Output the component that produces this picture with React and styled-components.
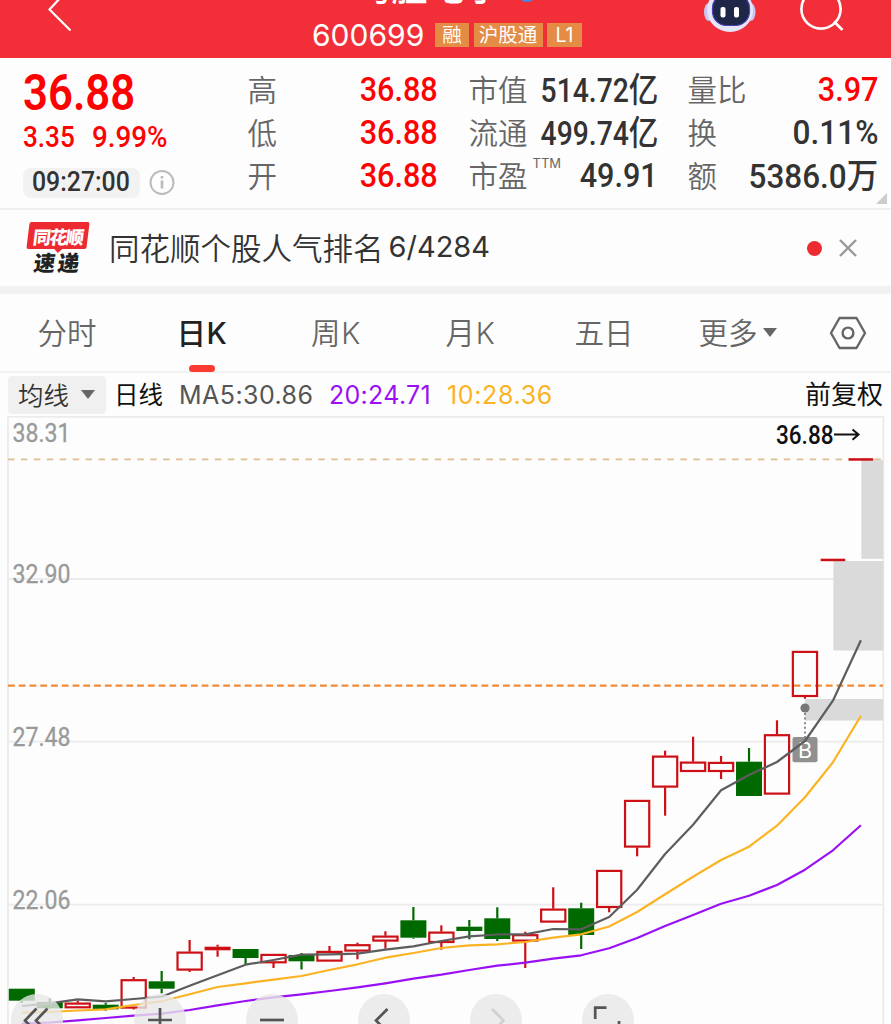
import React from 'react';
import styled, { createGlobalStyle, css } from 'styled-components';

const cjk = '"Noto Sans CJK SC", sans-serif';

const GlobalStyle = createGlobalStyle`
  * { box-sizing: border-box; }
  body {
    margin: 0;
    background: #fdfdfd;
    font-family: Inter, ${cjk};
  }
`;

const Screen = styled.div`
  display: flex;
  flex-direction: column;
  width: 891px;
  height: 1024px;
  overflow: hidden;
  background: #fdfdfd;
`;

const Header = styled.header`
  position: relative;
  display: flex;
  flex-direction: column;
  align-items: center;
  justify-content: flex-end;
  height: 58px;
  flex: none;
  overflow: hidden;
  background: #f22f38;
  color: #fff;
`;

const TitleRow = styled.div`
  display: flex;
  align-items: flex-end;
  gap: 14px;
  height: 36px;
  flex: none;
  margin-bottom: 9px;
  font: 500 36px/36px ${cjk};
  letter-spacing: 1px;
`;

const TitleBadge = styled.i`
  width: 20px;
  height: 20px;
  margin-bottom: 1px;
  border-radius: 50%;
  background: #3b8bea;
`;

const CodeRow = styled.div`
  display: flex;
  align-items: center;
  height: 46px;
  flex: none;
  padding-left: 3px;
  gap: 4.5px;
`;

const Code = styled.span`
  width: 118.5px;
  font-size: 30px;
  font-weight: 400;
  white-space: nowrap;
`;

const Tag = styled.span`
  display: flex;
  align-items: center;
  justify-content: center;
  width: ${({ width }) => width}px;
  height: 24px;
  background: #e48c45;
  font-size: 19.5px;
  line-height: 24px;
`;

const HeaderIcon = styled.svg`
  position: absolute;
  top: 0;
  left: ${({ left }) => left}px;
`;

const Quote = styled.section`
  position: relative;
  display: grid;
  grid-template-columns: 225px 190px 31px 189px 30px 190px;
  height: 152px;
  padding: 9.5px 0 0 23px;
  flex: none;
  border-bottom: 2px solid #efefef;
`;

const Column = styled.div`
  display: flex;
  flex-direction: column;
`;

const Num = styled.span`
  display: inline-block;
  font-family: Roboto, ${cjk};
  font-size: ${({ size = 34 }) => size}px;
  font-weight: ${({ weight = 500 }) => weight};
  line-height: 1;
  color: ${({ color = '#333' }) => color};
  white-space: nowrap;
  transform: scaleX(${({ squeeze = 0.9 }) => squeeze});
  transform-origin: ${({ origin = 'right' }) => origin} center;
`;

const Price = styled.div`
  height: 50px;
`;

const Change = styled.div`
  display: flex;
  gap: 9px;
  height: 50px;
  padding-top: 4px;
`;

const TimeRow = styled.div`
  display: flex;
  align-items: center;
  gap: 9px;
`;

const Time = styled.div`
  display: flex;
  align-items: center;
  width: 117px;
  height: 30px;
  padding: 0 0 1px 8.5px;
  border-radius: 8px;
  background: #f2f2f2;
`;

const Pair = styled.div`
  display: flex;
  align-items: center;
  justify-content: space-between;
  height: 43px;
  color: #666;
`;

// the negative right margin makes room for the unsqueezed box of the number
const Label = styled.span`
  margin: 0 -20px 1.5px -0.5px;
  font: 350 29.5px/40px ${cjk};
  white-space: nowrap;
`;

const Unit = styled.span`
  font-family: ${cjk};
  font-size: 34px;
  line-height: 1;
`;

const Sup = styled.sup`
  margin-left: 5px;
  font: 400 13px/0 Inter, sans-serif;
  vertical-align: 19px;
`;

const Corner = styled.i`
  position: absolute;
  right: 4px;
  bottom: 4px;
  border: solid transparent;
  border-width: 0 0 11px 11px;
  border-bottom-color: #ccc;
`;

const News = styled.section`
  display: flex;
  align-items: center;
  height: 84px;
  flex: none;
  padding: 0 33px 0 26px;
  border-bottom: 8px solid #f2f2f2;
`;

const Logo = styled.div`
  display: flex;
  flex-direction: column;
  align-items: center;
  width: 64px;
  margin-right: 19px;
  font: 900 19px/24px ${cjk};
`;

const LogoTop = styled.span`
  position: relative;
  display: flex;
  align-items: center;
  justify-content: center;
  width: 60px;
  height: 27px;
  border-radius: 2px;
  background: #ed2a30;
  color: #fff;
  font-size: 18px;
  letter-spacing: -1.6px;
  transform: skewX(-7deg);

  &::after {
    content: '';
    position: absolute;
    bottom: -4px;
    left: 28px;
    border: solid transparent;
    border-width: 4px 4px 0;
    border-top-color: #ed2a30;
  }
`;

const LogoBottom = styled.span`
  margin-top: 1px;
  color: #222;
  font-size: 21.5px;
  letter-spacing: 2.5px;
  transform: skewX(-8deg);
`;

const NewsText = styled.div`
  flex: 1;
  display: flex;
  align-items: center;
  gap: 5px;
  padding-bottom: 2px;
  color: #333;
  font: 350 30.5px/44px ${cjk};
`;

const NewsRank = styled.span`
  font: 400 29px/44px Inter, sans-serif;
`;

const Dot = styled.i`
  width: 15px;
  height: 15px;
  margin-right: 16px;
  border-radius: 50%;
  background: #ed2a30;
`;

const Tabs = styled.nav`
  display: grid;
  grid-template-columns: 134px 136px 132px 137px 130px 137px 84px;
  height: 79px;
  flex: none;
  border-bottom: 2px solid #f1f1f1;
`;

const Tab = styled.div`
  position: relative;
  display: flex;
  align-items: center;
  justify-content: center;
  gap: 5px;
  color: #666;
  font: 350 29.5px/40px Inter, ${cjk};
  letter-spacing: ${({ spacing = 0 }) => spacing}px;
  ${({ active }) => active && css`
    color: #222;
    font-weight: 500;

    &::after {
      content: '';
      position: absolute;
      bottom: -1px;
      left: 55px;
      width: 26px;
      height: 7px;
      border-radius: 3.5px;
      background: #fb3b32;
    }
  `}
`;

const Caret = styled.i`
  border: solid transparent;
  border-width: 9px 7px 0;
  border-top-color: #666;
`;

const Indicators = styled.section`
  display: flex;
  align-items: center;
  height: 43px;
  flex: none;
  padding: 0 8px;
`;

const Select = styled.div`
  display: flex;
  align-items: center;
  justify-content: space-between;
  width: 98px;
  height: 38px;
  padding: 0 11px 0 10px;
  margin-right: 8px;
  border-radius: 4px;
  background: #f0f0f0;
  color: #333;
  font: 350 25.5px/34px ${cjk};

  span {
    padding-bottom: 2px;
  }
`;

const Period = styled.span`
  width: 65px;
  padding-bottom: 2px;
  color: #111;
  font: 400 24.5px/38px ${cjk};
`;

const Average = styled.span`
  width: ${({ width }) => width}px;
  color: ${({ color }) => color};
  font-size: 25px;
  letter-spacing: ${({ spacing }) => spacing}px;
  white-space: nowrap;
`;

const Adjust = styled.span`
  margin-left: auto;
  padding-bottom: 3px;
  color: #111;
  font: 400 26px/38px ${cjk};
`;

const ChartArea = styled.section`
  position: relative;
  flex: 1;
  min-height: 0;
`;

const ChartSvg = styled.svg`
  display: block;
  font-family: Roboto, sans-serif;
`;

const Controls = styled.div`
  position: absolute;
  top: 578px;
  left: 11px;
  display: flex;
  gap: 60px;
`;

const Control = styled.button`
  width: 52px;
  height: 52px;
  padding: 0;
  border: 0;
  border-radius: 50%;
  background: rgba(231, 231, 231, 0.8);

  &:first-child {
    margin-right: 11px;
  }

  svg {
    display: block;
  }
`;

// kind, body top, body bottom, high, low
const candles = [
  ['down', 988.7, 1000.7, 988.7, 1003],
  ['down', 1002, 1008.3, 998.3, 1009],
  ['up', 1002.7, 1008, 1000.7, 1008],
  ['down', 1004.7, 1009.3, 1003, 1010.7],
  ['up', 979.3, 1008.3, 977, 1009.5],
  ['down', 981.3, 988.7, 971, 993.3],
  ['up', 951.7, 970.3, 940, 972],
  ['up', 946.7, 950.3, 944.7, 956.7],
  ['down', 949, 958, 949, 964.7],
  ['up', 954, 963, 954, 968],
  ['down', 955, 961.3, 953, 969.5],
  ['up', 951, 961.3, 946, 961.3],
  ['up', 944.3, 951.3, 942.7, 959.3],
  ['up', 935.7, 941.3, 931.3, 948.7],
  ['down', 920.3, 937.7, 907, 938.7],
  ['up', 931.7, 942.7, 925.3, 949.7],
  ['down', 926.7, 931, 920, 939.3],
  ['down', 918.3, 939, 907.3, 941],
  ['up', 934.3, 941.3, 931.7, 968],
  ['up', 908.7, 922.3, 887.3, 922.3],
  ['down', 908.3, 935, 902.7, 949],
  ['up', 870, 907.7, 870, 912.3],
  ['up', 800, 847.3, 800, 856.3],
  ['up', 755.7, 787.3, 750.7, 815.7],
  ['up', 761.7, 771.7, 736.7, 771.7],
  ['up', 762, 771.7, 756, 779],
  ['down', 761.7, 796, 748, 796],
  ['up', 734.3, 794.3, 720.3, 794.3],
  ['up', 651, 696.7, 651, 698.7],
  ['up', 558.7, 561.2, 558.7, 561.2],
  ['up', 458.2, 460.7, 458.2, 460.7]
];

const ma5 = [1006, 1003.3, 999.3, 1001.3, 999, 996.7, 985.7, 975.3, 964.7, 960, 954.7, 954.3, 953.7, 949.7, 946.3, 941, 936.3, 934.5, 934.3, 929, 929.3, 917, 889.7, 854, 824.7, 790.3, 775, 762, 741, 700.7, 640.3];
const ma10 = [1012.7, 1012, 1010.5, 1009.3, 1005, 1001.3, 994.3, 987, 983.3, 979.7, 976, 970, 964.3, 957.7, 953, 948, 945.3, 944.3, 942, 937.7, 934.3, 926.5, 912, 894.3, 876.7, 860, 846.7, 825.7, 797.3, 762.3, 715.7];
const ma20 = [1023.3, 1022.5, 1020.3, 1018, 1015.7, 1013.7, 1010, 1005.3, 1001, 997.3, 994.3, 991, 987.3, 983.3, 978.7, 974.7, 970, 965.7, 962.7, 958.7, 955.3, 948.3, 938, 926, 915, 903.7, 895.7, 885, 869.7, 850.3, 825.3];

const scale = [
  ['38.31', 442],
  ['32.90', 583],
  ['27.48', 746],
  ['22.06', 908.5]
];

const xAt = i => 21.8 + i * 27.97;

const toPoints = values => values.map((y, i) => `${xAt(i)},${y}`).join(' ');

const Candle = ({ index, data }) => {
  const [kind, top, bottom, high, low] = data;
  const x = xAt(index);
  const up = kind === 'up';
  const color = up ? '#cc1016' : '#006a00';
  const hollow = up && bottom - top > 4.5;
  // limit-up days have no range and are drawn as a slightly shorter dash
  const half = bottom - top < 3 ? 12.3 : 13;
  return (
    <g stroke={color} strokeWidth="2.2">
      {high < top && <line x1={x} x2={x} y1={high} y2={top} />}
      {low > bottom && <line x1={x} x2={x} y1={bottom} y2={low} />}
      {hollow
        ? <rect x={x - 12.1} y={top + 0.9} width="24.2" height={bottom - top - 1.6} fill="none" />
        : <rect x={x - half} y={top} width={half * 2} height={bottom - top} fill={color} stroke="none" />}
    </g>
  );
};

const Chart = () => (
  <ChartSvg width="891" height="608" viewBox="0 416 891 608">
    <g stroke="#ececec" strokeWidth="1.8" fill="none">
      <path d="M8 1024V416.9H883.3V1024" />
      <path d="M8 579H883M8 741.7H883M8 904.7H883" />
    </g>
    <g fill="#dadada">
      <rect x="861.3" y="460.3" width="22" height="98.5" />
      <rect x="833.4" y="561" width="50" height="89.5" />
      <rect x="805" y="699" width="78.3" height="21.5" />
    </g>
    <path d="M8 459.4H883" stroke="#dfbd91" strokeWidth="1.9" strokeDasharray="6.5 6.43" />
    <path d="M8 685.6H883" stroke="#f18a35" strokeWidth="2.2" strokeDasharray="6.8 3.96" />
    {scale.map(([label, y]) => (
      <text key={label} x="12.5" y={y} fontSize="25.5" fill="#999" stroke="#999" strokeWidth="0.3" textLength="58" lengthAdjust="spacingAndGlyphs">{label}</text>
    ))}
    <text x="776" y="443.5" fontSize="25.5" fontWeight="500" fill="#111" textLength="57.5" lengthAdjust="spacingAndGlyphs">36.88</text>
    <path d="M834 434.6H858M852.5 429.5L858.5 434.6L852.5 439.7" fill="none" stroke="#111" strokeWidth="2" />
    {candles.map((candle, i) => <Candle key={i} index={i} data={candle} />)}
    <circle cx="805" cy="708" r="4.6" fill="#777" />
    <path d="M805 713V737" stroke="#888" strokeWidth="2" strokeDasharray="2 2.6" />
    <rect x="792.5" y="737" width="25" height="25.3" rx="2" fill="#909090" />
    <text x="805" y="758.3" fontSize="21.5" fontFamily="Inter, sans-serif" fill="#fff" textAnchor="middle">B</text>
    <g fill="none" strokeWidth="2.2" strokeLinejoin="round">
      <polyline points={toPoints(ma20)} stroke="#9a10f5" />
      <polyline points={toPoints(ma10)} stroke="#fbb323" />
      <polyline points={toPoints(ma5)} stroke="#5d5d5d" />
    </g>
  </ChartSvg>
);

const controlPaths = [
  { d: 'M25.5 14.5L14 26.5L25.5 38.5M36.5 14.5L25 26.5L36.5 38.5' },
  { d: 'M14 26H38M26 14V38' },
  { d: 'M14 26H38' },
  { d: 'M29.5 15L18 26.5L29.5 38' },
  { d: 'M22 15L33.5 26.5L22 38', color: '#d0d0d0' },
  { d: 'M24.5 13.7H13.2V25M37 27V38H26' }
];

const stats = [
  ['市值', '514.72', '亿'],
  ['流通', '499.74', '亿'],
  ['市盈', '49.91', '']
];

const App = () => (
  <>
    <GlobalStyle />
    <Screen>
      <Header>
        <HeaderIcon left={44} width="30" height="34" fill="none" stroke="#fff" strokeWidth="2.2">
          <path d="M18 -4L5.5 9.5L26.5 30.5" />
        </HeaderIcon>
        <TitleRow>
          均胜电子
          <TitleBadge />
        </TitleRow>
        <CodeRow>
          <Code>600699</Code>
          <Tag width={34}>融</Tag>
          <Tag width={69}>沪股通</Tag>
          <Tag width={35}>L1</Tag>
        </CodeRow>
        <HeaderIcon left={702} width="56" height="34">
          <ellipse cx="6.5" cy="12" rx="4.5" ry="9" fill="#c9c6f0" />
          <ellipse cx="49" cy="12" rx="4.5" ry="9" fill="#c9c6f0" />
          <ellipse cx="28" cy="10" rx="23" ry="22" fill="#e6e6fa" />
          <rect x="10.5" y="-6" width="37" height="31.5" rx="14" fill="#1f2748" stroke="#4b3fb4" strokeWidth="1.2" />
          <rect x="18.5" y="7" width="5" height="10.5" rx="2" fill="#fff" />
          <rect x="32" y="7" width="5" height="10.5" rx="2" fill="#fff" />
        </HeaderIcon>
        <HeaderIcon left={798} width="50" height="34" fill="none" stroke="#fff" strokeWidth="2.6">
          <circle cx="23" cy="9" r="19.6" />
          <path d="M36 21.5L44.5 30" />
        </HeaderIcon>
      </Header>

      <Quote>
        <Column>
          <Price><Num size={50.5} squeeze={0.865} weight={600} origin="left" color="#fd0202">36.88</Num></Price>
          <Change>
            <Num size={30} squeeze={0.87} origin="left" color="#fd0202">3.35</Num>
            <Num size={30} squeeze={0.925} origin="left" color="#fd0202">9.99%</Num>
          </Change>
          <TimeRow>
            <Time><Num size={27} squeeze={0.92} origin="left">09:27:00</Num></Time>
            <svg width="27" height="27" fill="none" stroke="#bbb" strokeWidth="2">
              <circle cx="13" cy="13.5" r="11.5" />
              <path d="M13 11.5V19.5M13 7V9.5" strokeWidth="2.6" />
            </svg>
          </TimeRow>
        </Column>
        <Column>
          {['高', '低', '开'].map(label => (
            <Pair key={label}>
              <Label>{label}</Label>
              <Num color="#fd0202">36.88</Num>
            </Pair>
          ))}
        </Column>
        <i />
        <Column>
          {stats.map(([label, value, unit]) => (
            <Pair key={label}>
              <Label>{label}{!unit && <Sup>TTM</Sup>}</Label>
              <Num size={unit ? 32.5 : 34} squeeze={unit ? 0.87 : 0.9}>{value}{unit && <Unit>{unit}</Unit>}</Num>
            </Pair>
          ))}
        </Column>
        <i />
        <Column>
          <Pair>
            <Label>量比</Label>
            <Num color="#fd0202">3.97</Num>
          </Pair>
          <Pair>
            <Label>换</Label>
            <Num squeeze={0.93}>0.11%</Num>
          </Pair>
          <Pair>
            <Label>额</Label>
            <Num squeeze={0.925}>5386.0<Unit>万</Unit></Num>
          </Pair>
        </Column>
        <Corner />
      </Quote>

      <News>
        <Logo>
          <LogoTop>同花顺</LogoTop>
          <LogoBottom>速递</LogoBottom>
        </Logo>
        <NewsText>
          同花顺个股人气排名
          <NewsRank>6/4284</NewsRank>
        </NewsText>
        <Dot />
        <svg width="20" height="20" fill="none" stroke="#999" strokeWidth="2.4">
          <path d="M2 2L18 18M18 2L2 18" />
        </svg>
      </News>

      <Tabs>
        <Tab>分时</Tab>
        <Tab active spacing={0.5}>日K</Tab>
        <Tab spacing={0.7}>周K</Tab>
        <Tab spacing={0.7}>月K</Tab>
        <Tab>五日</Tab>
        <Tab>更多<Caret /></Tab>
        <Tab>
          <svg width="38" height="34" fill="none" stroke="#666" strokeWidth="2.4" strokeLinejoin="round">
            <path d="M10.5 2H27.5L36 17L27.5 32H10.5L2 17Z" />
            <circle cx="19" cy="17" r="5.4" />
          </svg>
        </Tab>
      </Tabs>

      <Indicators>
        <Select><span>均线</span><Caret /></Select>
        <Period>日线</Period>
        <Average width={150} spacing={0.45} color="#555">MA5:30.86</Average>
        <Average width={118} spacing={0.3} color="#9a10f5">20:24.71</Average>
        <Average width={120} spacing={0.65} color="#fbb323">10:28.36</Average>
        <Adjust>前复权</Adjust>
      </Indicators>

      <ChartArea>
        <Chart />
        <Controls>
          {controlPaths.map(({ d, color = '#555' }) => (
            <Control key={d}>
              <svg width="52" height="52" fill="none" stroke={color} strokeWidth="2.7">
                <path d={d} />
              </svg>
            </Control>
          ))}
        </Controls>
      </ChartArea>
    </Screen>
  </>
);

export default App;
